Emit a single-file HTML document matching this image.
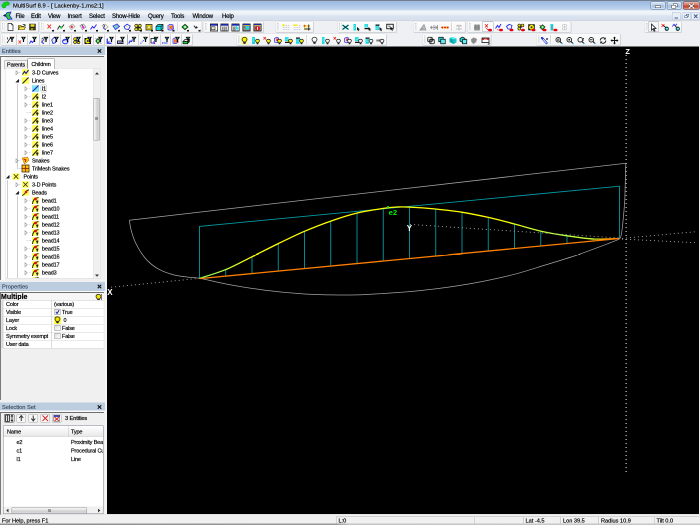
<!DOCTYPE html><html><head><meta charset="utf-8"><title>MultiSurf 8.9 - [ Lackenby-1.ms2:1]</title><style>
html,body{margin:0;padding:0;background:#f0f0f0;overflow:hidden;}
body{width:700px;height:525px;position:relative;font-family:"Liberation Sans",sans-serif;}
#root{position:absolute;left:0;top:0;width:1400px;height:1050px;transform:scale(0.5);transform-origin:0 0;will-change:transform;overflow:hidden;font-size:11px;color:#000;-webkit-font-smoothing:antialiased;-webkit-text-stroke:0.35px #000;letter-spacing:-0.3px;}
.abs{position:absolute;}
.t{position:absolute;white-space:nowrap;line-height:1;}
#title{left:0;top:0;width:1400px;height:22px;background:linear-gradient(#66707e 0,#7a8798 1.5px,#9dbbe2 2.5px,#a6c2e6 8px,#b7cfec 15px,#c6d9f0 20px,#eef3fa 21.5px)}
#menu{left:0;top:22px;width:1400px;height:19px;background:linear-gradient(#f4f7fb,#e9eff7 45%,#dbe4f0 50%,#d6e0ee);border-bottom:1px solid #b6bccc;box-sizing:border-box;}
.mi{position:absolute;top:3px;letter-spacing:-0.3px;font-size:12px;white-space:nowrap;line-height:14px;}
#tb1{left:0;top:41px;width:1400px;height:25px;background:#eef0f3;}
#tb2{left:0;top:66px;width:1400px;height:27px;background:#eef0f3;}
.band{position:absolute;background:linear-gradient(#fdfdfd,#f3f4f6);border:1px solid #d8dade;border-radius:3px;box-sizing:border-box;box-shadow:1px 1px 0 #c9ccd2;}
.grip{position:absolute;width:2px;border-left:1px dotted #9a9a9a;border-right:1px dotted #c8c8c8;}
.sep{position:absolute;width:1px;background:#b8b8b8;border-right:1px solid #fff;}
.ic{position:absolute;width:16px;height:16px;}
.pressed{position:absolute;border:1px solid #7da2ce;background:#dbe8f6;box-sizing:border-box;border-radius:2px;}
#left{left:0;top:93px;width:210px;height:936px;background:#f0f0f0;}
.phead{position:absolute;left:0;width:210px;height:18px;background:#bdcde0;}
.phead span{position:absolute;left:4px;top:3px;font-size:11.4px;letter-spacing:0;line-height:12px;color:#3a4a60;-webkit-text-stroke:0.3px #3a4a60;}
.px{position:absolute;left:194px;top:4px;width:10px;height:10px;}
#canvas{left:214px;top:93px;width:1184px;height:935px;background:#000;}
#status{left:0;top:1029px;width:1400px;height:21px;background:#f0f0f0;border-top:1px solid #d9d9d9;box-sizing:border-box;}
.st{position:absolute;top:5px;font-size:11.2px;letter-spacing:0;line-height:12px;white-space:nowrap;}
.ssep{position:absolute;top:3px;width:1px;height:15px;background:#a8a8a8;border-right:1px solid #fff;}
.tree{position:absolute;left:10px;top:43px;width:192px;height:421px;background:#fff;border:1px solid #dcdcdc;box-sizing:border-box;overflow:hidden;}
.tr{position:absolute;font-size:11px;line-height:16px;height:16px;white-space:nowrap;}
.tab{position:absolute;font-size:11px;line-height:14px;box-sizing:border-box;border:1px solid #8e8f8f;border-bottom:none;text-align:center;}
</style></head><body><div id="root">
<div id="title" class="abs">
<svg class="abs" style="left:2px;top:2px" width="18" height="16" viewBox="0 0 18 16"><path d="M1.5 8 L6 3 L13 1.5 L17 4 L16 8 L10 9 L9 13 L4 14 L2 11 Z" fill="#10d418" stroke="#0aa010" stroke-width="1"/></svg>
<div class="t" id="ttext" style="left:26px;top:4px;font-size:11.7px;letter-spacing:0;line-height:14px;text-shadow:0 0 4px #fff,0 0 6px #fff;">MultiSurf 8.9 - [ Lackenby-1.ms2:1]</div>
<div class="abs" style="left:1301px;top:3px;width:30px;height:16px;border:1px solid #5b7799;border-radius:3px;box-sizing:border-box;background:linear-gradient(#dbe7f5,#b9cde6 50%,#a3bddc 50%,#c2d5ec);box-shadow:inset 0 0 0 1px rgba(255,255,255,.6)"><div class="abs" style="left:8px;top:7px;width:12px;height:5px;background:#fff;border:1px solid #444;box-sizing:border-box"></div></div>
<div class="abs" style="left:1334px;top:3px;width:29px;height:16px;border:1px solid #5b7799;border-radius:3px;box-sizing:border-box;background:linear-gradient(#dbe7f5,#b9cde6 50%,#a3bddc 50%,#c2d5ec);box-shadow:inset 0 0 0 1px rgba(255,255,255,.6)"><div class="abs" style="left:11px;top:3px;width:9px;height:7px;border:1px solid #444;background:#fff;box-sizing:border-box"></div><div class="abs" style="left:8px;top:6px;width:9px;height:7px;border:1px solid #444;background:#fff;box-sizing:border-box"></div></div>
<div class="abs" style="left:1366px;top:3px;width:33px;height:16px;border:1px solid #5b2520;border-radius:3px;box-sizing:border-box;background:linear-gradient(#e9a99c,#d5735f 50%,#c1392b 50%,#d6735a);box-shadow:inset 0 0 0 1px rgba(255,255,255,.4)"><svg class="abs" style="left:10px;top:3px" width="12" height="10" viewBox="0 0 12 10"><path d="M1.5 1 L10.5 9 M10.5 1 L1.5 9" stroke="#3a3a3a" stroke-width="4" stroke-linecap="square"/><path d="M1.5 1 L10.5 9 M10.5 1 L1.5 9" stroke="#fff" stroke-width="2.2" stroke-linecap="square"/></svg></div>
</div>
<div id="menu" class="abs">
<svg class="abs" style="left:5px;top:1px" width="22" height="17" viewBox="0 0 22 17"><path d="M1 8 L6 5 V11Z" fill="#111"/><path d="M9 2 L17 1 L14 8 L19 15 L11 16 L6 8Z" fill="#18d420" stroke="#2828e0" stroke-width="1.6"/><circle cx="11" cy="6" r="1" fill="#c080c0"/><circle cx="12" cy="11" r="1" fill="#c080c0"/></svg>
<div class="mi" style="left:31px">File</div>
<div class="mi" style="left:62px">Edit</div>
<div class="mi" style="left:96px">View</div>
<div class="mi" style="left:135px">Insert</div>
<div class="mi" style="left:178px">Select</div>
<div class="mi" style="left:224px">Show-Hide</div>
<div class="mi" style="left:296px">Query</div>
<div class="mi" style="left:342px">Tools</div>
<div class="mi" style="left:385px">Window</div>
<div class="mi" style="left:444px">Help</div>
<div class="abs" style="left:1344px;top:2px;width:17px;height:16px;border:1px solid #b5c3d6;background:#e8eef7;box-sizing:border-box"><div class="abs" style="left:4px;top:10px;width:7px;height:2px;background:#3c5a86"></div></div>
<div class="abs" style="left:1365px;top:2px;width:17px;height:16px;border:1px solid #b5c3d6;background:#e8eef7;box-sizing:border-box"><div class="abs" style="left:6px;top:3px;width:6px;height:5px;border:1px solid #3c5a86;box-sizing:border-box"></div><div class="abs" style="left:3px;top:6px;width:6px;height:5px;border:1px solid #3c5a86;background:#e8eef7;box-sizing:border-box"></div></div>
<div class="abs" style="left:1383px;top:2px;width:16px;height:16px;border:1px solid #b5c3d6;background:#e8eef7;box-sizing:border-box"><svg class="abs" style="left:3px;top:3px" width="9" height="9" viewBox="0 0 9 9"><path d="M1 1 L8 8 M8 1 L1 8" stroke="#3c5a86" stroke-width="1.8"/></svg></div>
</div>
<div id="tb1" class="abs"><div class="band" style="left:1px;top:1px;width:76px;height:23px"></div><div class="grip" style="left:5px;top:5px;height:14px"></div>
<div class="band" style="left:79px;top:1px;width:325px;height:23px"></div><div class="grip" style="left:83px;top:5px;height:14px"></div>
<div class="band" style="left:406px;top:1px;width:121px;height:23px"></div><div class="grip" style="left:410px;top:5px;height:14px"></div>
<div class="band" style="left:550px;top:1px;width:77px;height:23px"></div><div class="grip" style="left:554px;top:5px;height:14px"></div>
<div class="band" style="left:675px;top:1px;width:118px;height:23px"></div><div class="grip" style="left:679px;top:5px;height:14px"></div>
<div class="band" style="left:826px;top:1px;width:105px;height:23px"></div><div class="grip" style="left:830px;top:5px;height:14px"></div>
<div class="band" style="left:934px;top:1px;width:208px;height:23px"></div><div class="grip" style="left:938px;top:5px;height:14px"></div>
<div class="band" style="left:1288px;top:1px;width:75px;height:23px"></div><div class="grip" style="left:1292px;top:5px;height:14px"></div>
<div class="pressed" style="left:964px;top:2px;width:23px;height:21px;background:#fafbfd;border-color:#a8acb4"></div>
<div class="pressed" style="left:1296px;top:2px;width:22px;height:21px;background:#f4f6f9;border-color:#a8acb4"></div>
<svg class="ic" style="left:13px;top:5px" viewBox="0 0 16 16"><path d="M3 1 H10 L13 4 V15 H3Z" fill="#fff" stroke="#222" stroke-width="1.4"/><path d="M10 1 V4 H13" fill="none" stroke="#222" stroke-width="1"/></svg>
<svg class="ic" style="left:36px;top:5px" viewBox="0 0 16 16"><path d="M1 5 H6 L7 6.5 H12 V13 H1Z" fill="#d8c040" stroke="#3a3000" stroke-width="1.2"/><path d="M3 8 H15 L12 13.5 H1Z" fill="#fff060" stroke="#3a3000" stroke-width="1.2"/><path d="M9 3 Q12 1 14 3.5 L15 2 V6 H11.5 L13 4.6 Q11.5 3 10 4Z" fill="#222"/></svg>
<svg class="ic" style="left:57px;top:5px" viewBox="0 0 16 16"><rect x="1.5" y="1.5" width="13" height="13" fill="#222"/><rect x="4" y="2.5" width="8" height="5" fill="#e8d820"/><rect x="4.5" y="10" width="7" height="4.5" fill="#a09000"/><rect x="9" y="10.8" width="2" height="3" fill="#222"/></svg>
<svg class="ic" style="left:92px;top:6px" viewBox="0 0 16 16"><path d="M3 2 L10 10 M10 2 L3 10" stroke="#f01818" stroke-width="1.8"/><path d="M16 12 V16 H12 Z" fill="#111"/><rect x="12" y="13" width="4" height="3" fill="#111"/></svg>
<svg class="ic" style="left:114px;top:6px" viewBox="0 0 16 16"><path d="M1 12 L5 5 L9 9 L14 2" stroke="#222" stroke-width="1.8" fill="none"/><circle cx="8.5" cy="8" r="2.3" fill="#10d020"/><path d="M16 12 V16 H12 Z" fill="#111"/><rect x="12" y="13" width="4" height="3" fill="#111"/></svg>
<svg class="ic" style="left:136px;top:6px" viewBox="0 0 16 16"><path d="M2 6 L9 1 L14 6 L7 12Z" fill="#f4f4f4" stroke="#9a9a9a" stroke-width="1.3"/><circle cx="7.5" cy="6.5" r="2.2" fill="#f01818"/><path d="M16 12 V16 H12 Z" fill="#111"/><rect x="12" y="13" width="4" height="3" fill="#111"/></svg>
<svg class="ic" style="left:158px;top:6px" viewBox="0 0 16 16"><path d="M2 4 L9 1 L14 7 L7 12Z" fill="#f0f0f0" stroke="#8a8a8a" stroke-width="1.3"/><path d="M5 2 L9 7" stroke="#222" stroke-width="1.6"/><circle cx="8.5" cy="7.5" r="2.2" fill="#f018e8"/><path d="M16 12 V16 H12 Z" fill="#111"/><rect x="12" y="13" width="4" height="3" fill="#111"/></svg>
<svg class="ic" style="left:180px;top:6px" viewBox="0 0 16 16"><path d="M1 12 L5 6 L8 9 L13 2" stroke="#2828f0" stroke-width="2" fill="none"/><path d="M16 12 V16 H12 Z" fill="#111"/><rect x="12" y="13" width="4" height="3" fill="#111"/></svg>
<svg class="ic" style="left:202px;top:6px" viewBox="0 0 16 16"><path d="M2 4 L9 1 L14 7 L8 12Z" fill="#f4f4e0" stroke="#b0a860" stroke-width="1.2"/><path d="M4 2 Q9 4 6 7 T10 12" stroke="#2828e0" stroke-width="1.8" fill="none"/><path d="M16 12 V16 H12 Z" fill="#111"/><rect x="12" y="13" width="4" height="3" fill="#111"/></svg>
<svg class="ic" style="left:224px;top:6px" viewBox="0 0 16 16"><path d="M2 5 L10 1 L15 6 L7 12Z" fill="#70e8f0" stroke="#2030e0" stroke-width="1.6"/><path d="M5 3.5 L11 9 M8 2 L13 7.5" stroke="#e06060" stroke-width="1"/><path d="M16 12 V16 H12 Z" fill="#111"/><rect x="12" y="13" width="4" height="3" fill="#111"/></svg>
<svg class="ic" style="left:246px;top:6px" viewBox="0 0 16 16"><path d="M2 6 L8 1.5 L14.5 5 L11 12 L4.5 11Z" fill="#fafafa" stroke="#2030e0" stroke-width="1.7"/><path d="M6 6 L10 7" stroke="#c8c060" stroke-width="1"/><path d="M16 12 V16 H12 Z" fill="#111"/><rect x="12" y="13" width="4" height="3" fill="#111"/></svg>
<svg class="ic" style="left:268px;top:6px" viewBox="0 0 16 16"><g fill="#f0e000" stroke="#222" stroke-width="1.3"><circle cx="4.5" cy="4.5" r="3"/><circle cx="11.5" cy="4.5" r="3"/><circle cx="4.5" cy="11.5" r="3"/><circle cx="11.5" cy="11.5" r="3"/></g><circle cx="8" cy="8" r="2" fill="#222"/><path d="M16 12 V16 H12 Z" fill="#111"/><rect x="12" y="13" width="4" height="3" fill="#111"/></svg>
<svg class="ic" style="left:290px;top:6px" viewBox="0 0 16 16"><rect x="2" y="2" width="12" height="11" fill="#f4e800" stroke="#222" stroke-width="1.6"/><rect x="5" y="5" width="6" height="5" fill="#fff480" stroke="#555" stroke-width=".8"/><path d="M16 12 V16 H12 Z" fill="#111"/><rect x="12" y="13" width="4" height="3" fill="#111"/></svg>
<svg class="ic" style="left:311px;top:6px" viewBox="0 0 16 16"><path d="M5 2 H15 V10 L11 14 H1 V6Z" fill="#10d8e0" stroke="#111" stroke-width="1.4"/><path d="M1 6 H11 V14 M11 6 L15 2" fill="none" stroke="#111" stroke-width="1.2"/><path d="M16 12 V16 H12 Z" fill="#111"/><rect x="12" y="13" width="4" height="3" fill="#111"/></svg>
<svg class="ic" style="left:333px;top:6px" viewBox="0 0 16 16"><path d="M3 4 Q8 0 13 3 L14 11 Q8 15 3 12Z" fill="#e8e0f8" stroke="#3838e0" stroke-width="1.6"/><rect x="6" y="4" width="6" height="7" fill="#f02020"/><path d="M8 4 V11 M10 4 V11" stroke="#f0d000" stroke-width="1"/><path d="M16 12 V16 H12 Z" fill="#111"/><rect x="12" y="13" width="4" height="3" fill="#111"/></svg>
<svg class="ic" style="left:362px;top:6px" viewBox="0 0 16 16"><path d="M2 7 L8 1.5 L14 7 L8 12.5Z" fill="#18d028" stroke="#222" stroke-width="1.6"/><rect x="6" y="5" width="4" height="4" fill="#b0f0b0"/><path d="M16 12 V16 H12 Z" fill="#111"/><rect x="12" y="13" width="4" height="3" fill="#111"/></svg>
<svg class="ic" style="left:385px;top:6px" viewBox="0 0 16 16"><path d="M3 4 Q4 9 9 8 M6.5 5.5 L9.5 8 L6 10" stroke="#222" stroke-width="1.6" fill="none"/><path d="M16 12 V16 H12 Z" fill="#111"/><rect x="12" y="13" width="4" height="3" fill="#111"/></svg>
<svg class="ic" style="left:420px;top:6px" viewBox="0 0 16 16"><rect x="0.5" y="1" width="15" height="14" fill="#fff" stroke="#111" stroke-width="1.6"/><rect x="1" y="1" width="14" height="3.4" fill="#1828a8"/><rect x="3" y="6.5" width="7" height="6" fill="#e8e8d0" stroke="#222" stroke-width="1.2"/></svg>
<svg class="ic" style="left:441px;top:6px" viewBox="0 0 16 16"><rect x="0.5" y="1" width="15" height="14" fill="#fff" stroke="#111" stroke-width="1.6"/><rect x="1" y="1" width="14" height="3.4" fill="#1828a8"/><rect x="3" y="6" width="10" height="8" fill="#909090"/><path d="M6.3 6 V14 M9.6 6 V14" stroke="#d8d8d8" stroke-width="1"/></svg>
<svg class="ic" style="left:463px;top:6px" viewBox="0 0 16 16"><rect x="0.5" y="1" width="15" height="14" fill="#fff" stroke="#111" stroke-width="1.6"/><rect x="1" y="1" width="14" height="3.4" fill="#1828a8"/><rect x="2.5" y="6" width="6" height="8" fill="#909090"/><path d="M9 4 L15 10 L12 10.5 L13.5 14 L12 14.5 L10.5 11 L9 13Z" fill="#18e0e8"/></svg>
<svg class="ic" style="left:485px;top:6px" viewBox="0 0 16 16"><rect x="0.5" y="1" width="15" height="14" fill="#8a8a8a" stroke="#111" stroke-width="1.6"/><rect x="1" y="1" width="14" height="3" fill="#1828a8"/><path d="M1 3.6 H15" stroke="#e8d020" stroke-width="1"/><path d="M6 5 H13 V12 H8 L5 9Z" fill="#18d8e8"/><path d="M3 6 L6 9" stroke="#e02020" stroke-width="1.2"/></svg>
<svg class="ic" style="left:507px;top:6px" viewBox="0 0 16 16"><rect x="0.5" y="1" width="15" height="14" fill="#9a9a9a" stroke="#111" stroke-width="1.6"/><rect x="1" y="1" width="14" height="3" fill="#1828a8"/><path d="M1 3.6 H15" stroke="#e8d020" stroke-width="1"/><ellipse cx="8" cy="9.5" rx="5" ry="4.6" fill="#e81010"/><rect x="7" y="6.5" width="2" height="6" fill="#fff"/></svg>
<svg class="ic" style="left:563px;top:6px" viewBox="0 0 16 16"><g fill="#c4c4d4"><rect x="3" y="7" width="3" height="1.6"/><rect x="8" y="7" width="3" height="1.6"/><rect x="12.5" y="7" width="3" height="1.6"/><rect x="3" y="11" width="3" height="1.6"/><rect x="8" y="11" width="3" height="1.6"/><rect x="12.5" y="11" width="3" height="1.6"/><rect x="8" y="3" width="3" height="1.6"/><rect x="12.5" y="3" width="3" height="1.6"/></g><rect x="2" y="1.5" width="4" height="4" fill="#f4e800"/></svg>
<svg class="ic" style="left:585px;top:6px" viewBox="0 0 16 16"><g fill="#c4c4d4"><rect x="3" y="7" width="3" height="1.6"/><rect x="8" y="7" width="3" height="1.6"/><rect x="12.5" y="7" width="3" height="1.6"/><rect x="3" y="11" width="3" height="1.6"/><rect x="8" y="11" width="3" height="1.6"/><rect x="12.5" y="11" width="3" height="1.6"/><rect x="12.5" y="3" width="3" height="1.6"/></g><rect x="1" y="2" width="9" height="2.6" fill="#f4e800"/></svg>
<svg class="ic" style="left:606px;top:6px" viewBox="0 0 16 16"><path d="M3 2 V13 M1 5 H14" stroke="#f4d000" stroke-width="2"/><rect x="1.5" y="3" width="3.4" height="3.4" fill="#f04010"/><path d="M11.5 2 V14 M3 11 H15" stroke="#222" stroke-width="1.8"/></svg>
<svg class="ic" style="left:683px;top:6px" viewBox="0 0 16 16"><path d="M2 3 L14 12 M14 3 L2 12" stroke="#10c8d0" stroke-width="3"/><path d="M2 3 L14 12 M14 3 L2 12" stroke="#111" stroke-width="1.4"/></svg>
<svg class="ic" style="left:705px;top:6px" viewBox="0 0 16 16"><rect x="2" y="1" width="5" height="13" fill="#18d8e0"/><path d="M3 4 H6 M3 7 H6 M3 10 H6" stroke="#90f0f4" stroke-width="1"/><path d="M9 7 L15 12 L12 12 L13.5 15 L12 15.5 L10.8 12.6 L9 14Z" fill="#111"/></svg>
<svg class="ic" style="left:727px;top:6px" viewBox="0 0 16 16"><rect x="2" y="1" width="7" height="7" fill="#18d8e0"/><path d="M3 3 H8 M3 5.5 H8" stroke="#90f0f4" stroke-width="1"/><rect x="2" y="9" width="8" height="2.4" fill="#111"/><path d="M10 7 L15.5 12 L13 12 L14 15 L12.6 15.4 L11.6 12.6 L10 14Z" fill="#111"/></svg>
<svg class="ic" style="left:749px;top:6px" viewBox="0 0 16 16"><rect x="2" y="4" width="7" height="9" fill="#18d8e0"/><rect x="2" y="2" width="8" height="2.4" fill="#111"/><path d="M3 7 H8 M3 10 H8" stroke="#90f0f4" stroke-width="1"/><path d="M10 7 L15.5 12 L13 12 L14 15 L12.6 15.4 L11.6 12.6 L10 14Z" fill="#111"/></svg>
<svg class="ic" style="left:772px;top:6px" viewBox="0 0 16 16"><rect x="1.5" y="1.5" width="13" height="9" fill="#fff" stroke="#111" stroke-width="1.8"/><path d="M4 5 H8 V8" stroke="#111" stroke-width="1.2" fill="none"/><path d="M9 6 L15 11.5 L12.4 11.5 L13.6 14.6 L12.2 15 L11 12 L9 13.6Z" fill="#111"/></svg>
<svg class="ic" style="left:838px;top:6px" viewBox="0 0 16 16"><path d="M2 13 L10 2 L14 13Z" fill="#c0c0c0" stroke="#909090" stroke-width="1.4"/><path d="M5 13 Q6 10 9 9" stroke="#808080" fill="none"/></svg>
<svg class="ic" style="left:860px;top:6px" viewBox="0 0 16 16"><path d="M1 8 H7 M4 5 L1 8 L4 11 M9 8 H14 M11 5 L14 8 L11 11 M8 3 V13 M15 3 V13" stroke="#8a8a8a" stroke-width="1.6" fill="none"/></svg>
<svg class="ic" style="left:882px;top:6px" viewBox="0 0 16 16"><path d="M1 8 H15" stroke="#f0d800" stroke-width="2.4"/><circle cx="2.5" cy="8" r="2" fill="#f01818"/><circle cx="13.5" cy="8" r="2" fill="#f01818"/><circle cx="8" cy="8" r="2" fill="#f01818"/><path d="M5 5.5 V10.5 M11 5.5 V10.5" stroke="#f0d800" stroke-width="1.6"/></svg>
<svg class="ic" style="left:910px;top:6px" viewBox="0 0 16 16"><path d="M8 2 V14 M2 5 L14 5 M2 11 H14 M4 3 L8 6 L12 3" stroke="#b4b4b4" stroke-width="1.4" fill="none"/></svg>
<svg class="ic" style="left:946px;top:6px" viewBox="0 0 16 16"><rect x="2" y="2" width="12" height="12" fill="#b0b0b0"/><path d="M5 2 V14 M8 2 V14 M11 2 V14 M2 5 H14 M2 8 H14 M2 11 H14" stroke="#707070" stroke-width="1"/></svg>
<svg class="ic" style="left:968px;top:6px" viewBox="0 0 16 16"><path d="M2 1.5 L8 8 M8 1.5 L2 8" stroke="#f01818" stroke-width="1.6"/><path d="M5 9 Q6 13 10 12.5" stroke="#f01818" stroke-width="1.3" fill="none"/><ellipse cx="12" cy="13" rx="4" ry="2.6" fill="#e80010"/></svg>
<svg class="ic" style="left:990px;top:6px" viewBox="0 0 16 16"><path d="M1 10 L5 4 L8 8 L12 1" stroke="#2828f0" stroke-width="2" fill="none"/><path d="M4 11 Q6 13.5 9 13" stroke="#f01818" stroke-width="1.2" fill="none"/><ellipse cx="12" cy="13" rx="4" ry="2.6" fill="#e80010"/></svg>
<svg class="ic" style="left:1011px;top:6px" viewBox="0 0 16 16"><path d="M2 6 L7 1.5 L13 4 L11 11 L5 11Z" fill="#fafafa" stroke="#2030e0" stroke-width="1.7"/><path d="M6 5 L9 8" stroke="#c8c060" stroke-width="1"/><ellipse cx="12" cy="13" rx="4" ry="2.6" fill="#e80010"/></svg>
<svg class="ic" style="left:1034px;top:6px" viewBox="0 0 16 16"><g fill="#f0e000" stroke="#222" stroke-width="1.3"><circle cx="4.5" cy="4" r="2.8"/><circle cx="11" cy="4" r="2.8"/><circle cx="4.5" cy="10.5" r="2.8"/></g><circle cx="7.5" cy="7.5" r="1.8" fill="#222"/><ellipse cx="12" cy="13" rx="4" ry="2.6" fill="#e80010"/></svg>
<svg class="ic" style="left:1055px;top:6px" viewBox="0 0 16 16"><rect x="1.5" y="1.5" width="13" height="12" fill="#111"/><circle cx="8" cy="7.5" r="5" fill="#f4e800"/><circle cx="8" cy="7.5" r="2" fill="#203090"/><ellipse cx="12" cy="13" rx="4" ry="2.6" fill="#e80010"/></svg>
<svg class="ic" style="left:1077px;top:6px" viewBox="0 0 16 16"><path d="M2 3 L5 6" stroke="#222" stroke-width="1.2"/><path d="M3 8 L8 2.5 L13 7 L8 12.5Z" fill="#18d028" stroke="#222" stroke-width="1.4"/><rect x="6.4" y="5.4" width="3.4" height="3.4" fill="#b0f0b0"/><ellipse cx="12" cy="13" rx="4" ry="2.6" fill="#e80010"/></svg>
<svg class="ic" style="left:1099px;top:6px" viewBox="0 0 16 16"><rect x="2" y="1" width="5.5" height="13" fill="#18d8e0"/><path d="M5 4 V11 L9 13" stroke="#c06060" stroke-width="1.2" fill="none"/><ellipse cx="12" cy="13" rx="4" ry="2.6" fill="#e80010"/></svg>
<svg class="ic" style="left:1121px;top:6px" viewBox="0 0 16 16"><path d="M4 2 H12 V12 H4Z M8 2 V12 M4 7 H12 M5 12 V15 M11 12 V15" stroke="#b8b8b8" stroke-width="1.3" fill="none" stroke-dasharray="2 1"/></svg>
<svg class="ic" style="left:1299px;top:6px" viewBox="0 0 16 16"><path d="M4 1 L4 13.5 L7 10.6 L9.2 15.4 L11 14.6 L8.8 10 L13 10Z" fill="#fff" stroke="#111" stroke-width="1.5"/></svg>
<svg class="ic" style="left:1322px;top:6px" viewBox="0 0 16 16"><path d="M1 1 L7 7 M7 1 L1 7" stroke="#f01818" stroke-width="1.5"/><path d="M5 4 L11 9" stroke="#111" stroke-width="1.6"/><circle cx="11.5" cy="10.5" r="3.4" fill="#18b8c8" stroke="#111" stroke-width="1.5"/><circle cx="12" cy="10" r="1.2" fill="#e0ffff"/></svg>
<svg class="ic" style="left:1344px;top:6px" viewBox="0 0 16 16"><path d="M0.5 6 L4 1.5 L6.5 4.5 L10 0.5" stroke="#2828f0" stroke-width="1.7" fill="none"/><path d="M5 4 L11 9" stroke="#111" stroke-width="1.6"/><circle cx="11.5" cy="10.5" r="3.4" fill="#18b8c8" stroke="#111" stroke-width="1.5"/><circle cx="12" cy="10" r="1.2" fill="#e0ffff"/></svg>
<div class="sep" style="left:355px;top:4px;height:17px"></div>
<div class="sep" style="left:903px;top:4px;height:17px"></div></div>
<div id="tb2" class="abs"><div class="band" style="left:1px;top:1px;width:384px;height:24px"></div><div class="grip" style="left:5px;top:5px;height:15px"></div>
<div class="band" style="left:472px;top:1px;width:301px;height:24px"></div><div class="grip" style="left:476px;top:5px;height:15px"></div>
<div class="band" style="left:844px;top:1px;width:138px;height:24px"></div><div class="grip" style="left:848px;top:5px;height:15px"></div>
<div class="band" style="left:1072px;top:1px;width:169px;height:24px"></div><div class="grip" style="left:1076px;top:5px;height:15px"></div>
<svg class="ic" style="left:13px;top:7px" viewBox="0 0 16 16"><path d="M1 13 L9 1" stroke="#111" stroke-width="1.4"/><path d="M2 1.5 V6" stroke="#111" stroke-width="1.3"/><path d="M6 0.8 H16 L12.2 6.4 V11 H9.8 V6.4 Z" fill="#0a0a0a"/><circle cx="11" cy="3" r="1.3" fill="#18b8e8"/><path d="M7 0.5 H15" stroke="#d89060" stroke-width="0.8"/></svg>
<svg class="ic" style="left:36px;top:7px" viewBox="0 0 16 16"><path d="M1 8 L6 14 M6 8 L1 14" stroke="#f03030" stroke-width="1.6"/><path d="M6 0.8 H16 L12.2 6.4 V11 H9.8 V6.4 Z" fill="#0a0a0a"/><circle cx="11" cy="3" r="1.3" fill="#18b8e8"/><path d="M7 0.5 H15" stroke="#d89060" stroke-width="0.8"/></svg>
<div class="abs" style="left:33px;top:3px;width:1px;height:21px;background:#a8aaae"></div>
<svg class="ic" style="left:58px;top:7px" viewBox="0 0 16 16"><path d="M1 14 L4 9 L7 12 L10 8" stroke="#2828f0" stroke-width="2" fill="none"/><path d="M6 0.8 H16 L12.2 6.4 V11 H9.8 V6.4 Z" fill="#0a0a0a"/><circle cx="11" cy="3" r="1.3" fill="#18b8e8"/><path d="M7 0.5 H15" stroke="#d89060" stroke-width="0.8"/></svg>
<div class="abs" style="left:55px;top:3px;width:1px;height:21px;background:#a8aaae"></div>
<svg class="ic" style="left:81px;top:7px" viewBox="0 0 16 16"><path d="M1 5 L6 2 L9 9 L5 14Z" fill="#f4f4d8" stroke="#b0a860" stroke-width="1"/><path d="M3 3 Q8 6 4 9 T7 14" stroke="#2828e0" stroke-width="1.8" fill="none"/><path d="M6 0.8 H16 L12.2 6.4 V11 H9.8 V6.4 Z" fill="#0a0a0a"/><circle cx="11" cy="3" r="1.3" fill="#18b8e8"/><path d="M7 0.5 H15" stroke="#d89060" stroke-width="0.8"/></svg>
<div class="abs" style="left:78px;top:3px;width:1px;height:21px;background:#a8aaae"></div>
<svg class="ic" style="left:102px;top:7px" viewBox="0 0 16 16"><path d="M1.5 7 L6 2 L10 4 L9 12 L4 14Z" fill="#fafafa" stroke="#2030e0" stroke-width="1.8"/><path d="M5 7 L7 11" stroke="#c8b040" stroke-width="1"/><path d="M6 0.8 H16 L12.2 6.4 V11 H9.8 V6.4 Z" fill="#0a0a0a"/><circle cx="11" cy="3" r="1.3" fill="#18b8e8"/><path d="M7 0.5 H15" stroke="#d89060" stroke-width="0.8"/></svg>
<div class="abs" style="left:99px;top:3px;width:1px;height:21px;background:#a8aaae"></div>
<svg class="ic" style="left:124px;top:7px" viewBox="0 0 16 16"><ellipse cx="6.5" cy="10" rx="5.5" ry="4.6" fill="#e8e8ff" stroke="#2838f0" stroke-width="1.8"/><path d="M2 9 Q7 5 12 8" stroke="#2838f0" stroke-width="1.4" fill="none"/><path d="M6 0.8 H16 L12.2 6.4 V11 H9.8 V6.4 Z" fill="#0a0a0a"/><circle cx="11" cy="3" r="1.3" fill="#18b8e8"/><path d="M7 0.5 H15" stroke="#d89060" stroke-width="0.8"/></svg>
<div class="abs" style="left:121px;top:3px;width:1px;height:21px;background:#a8aaae"></div>
<svg class="ic" style="left:146px;top:7px" viewBox="0 0 16 16"><g fill="#f0e000" stroke="#222" stroke-width="1.3"><circle cx="4" cy="5" r="2.8"/><circle cx="4" cy="11.5" r="2.8"/><circle cx="11" cy="11.5" r="2.8"/></g><circle cx="7.5" cy="8" r="1.8" fill="#222"/><path d="M6 0.8 H16 L12.2 6.4 V11 H9.8 V6.4 Z" fill="#0a0a0a"/><circle cx="11" cy="3" r="1.3" fill="#18b8e8"/><path d="M7 0.5 H15" stroke="#d89060" stroke-width="0.8"/></svg>
<div class="abs" style="left:143px;top:3px;width:1px;height:21px;background:#a8aaae"></div>
<svg class="ic" style="left:168px;top:7px" viewBox="0 0 16 16"><rect x="1" y="3" width="13" height="12" fill="#111"/><circle cx="7.5" cy="9" r="5" fill="#f4e800"/><circle cx="7.5" cy="9" r="2" fill="#203090"/><path d="M6 0.8 H16 L12.2 6.4 V11 H9.8 V6.4 Z" fill="#0a0a0a"/><circle cx="11" cy="3" r="1.3" fill="#18b8e8"/><path d="M7 0.5 H15" stroke="#d89060" stroke-width="0.8"/></svg>
<div class="abs" style="left:165px;top:3px;width:1px;height:21px;background:#a8aaae"></div>
<svg class="ic" style="left:190px;top:7px" viewBox="0 0 16 16"><path d="M1 3 L4 6 M10 12 L13 15" stroke="#222" stroke-width="1"/><path d="M1.5 9 L6 4 L10.5 9 L6 14.5Z" fill="#18d028" stroke="#222" stroke-width="1.4"/><rect x="4.4" y="7.4" width="3.2" height="3.2" fill="#b0f0b0"/><path d="M6 0.8 H16 L12.2 6.4 V11 H9.8 V6.4 Z" fill="#0a0a0a"/><circle cx="11" cy="3" r="1.3" fill="#18b8e8"/><path d="M7 0.5 H15" stroke="#d89060" stroke-width="0.8"/></svg>
<div class="abs" style="left:187px;top:3px;width:1px;height:21px;background:#a8aaae"></div>
<svg class="ic" style="left:212px;top:7px" viewBox="0 0 16 16"><path d="M2.5 4 V13.5 H11" stroke="#2828f0" stroke-width="2.4" fill="none"/><path d="M3 13 L7 9" stroke="#2828f0" stroke-width="1.4"/><path d="M6 0.8 H16 L12.2 6.4 V11 H9.8 V6.4 Z" fill="#0a0a0a"/><circle cx="11" cy="3" r="1.3" fill="#18b8e8"/><path d="M7 0.5 H15" stroke="#d89060" stroke-width="0.8"/></svg>
<div class="abs" style="left:209px;top:3px;width:1px;height:21px;background:#a8aaae"></div>
<svg class="ic" style="left:234px;top:7px" viewBox="0 0 16 16"><rect x="1" y="9" width="11" height="5" fill="#f0f0ff" stroke="#111" stroke-width="1.8"/><path d="M3 11.5 H10" stroke="#2838e0" stroke-width="1.4"/><path d="M6 0.8 H16 L12.2 6.4 V11 H9.8 V6.4 Z" fill="#0a0a0a"/><circle cx="11" cy="3" r="1.3" fill="#18b8e8"/><path d="M7 0.5 H15" stroke="#d89060" stroke-width="0.8"/></svg>
<div class="abs" style="left:231px;top:3px;width:1px;height:21px;background:#a8aaae"></div>
<svg class="ic" style="left:257px;top:7px" viewBox="0 0 16 16"><path d="M0.5 14 L3 9 L6 10 L8 6" stroke="#2828f0" stroke-width="2.2" fill="none"/><path d="M6 0.8 H16 L12.2 6.4 V11 H9.8 V6.4 Z" fill="#0a0a0a"/><circle cx="11" cy="3" r="1.3" fill="#18b8e8"/><path d="M7 0.5 H15" stroke="#d89060" stroke-width="0.8"/></svg>
<div class="abs" style="left:254px;top:3px;width:1px;height:21px;background:#a8aaae"></div>
<svg class="ic" style="left:280px;top:7px" viewBox="0 0 16 16"><path d="M1 14 L8 7" stroke="#2828f0" stroke-width="1.8" stroke-dasharray="2 1.6"/><path d="M6 0.8 H16 L12.2 6.4 V11 H9.8 V6.4 Z" fill="#0a0a0a"/><circle cx="11" cy="3" r="1.3" fill="#18b8e8"/><path d="M7 0.5 H15" stroke="#d89060" stroke-width="0.8"/></svg>
<div class="abs" style="left:277px;top:3px;width:1px;height:21px;background:#a8aaae"></div>
<svg class="ic" style="left:301px;top:7px" viewBox="0 0 16 16"><rect x="1" y="4" width="7" height="9" fill="#fff" stroke="#111" stroke-width="1.6"/><path d="M6 9 L9 15" stroke="#f018e8" stroke-width="2"/><path d="M3 13 L9 14" stroke="#2828f0" stroke-width="1.6"/><rect x="8" y="5" width="3" height="6" fill="#18c8d8"/><path d="M6 0.8 H16 L12.2 6.4 V11 H9.8 V6.4 Z" fill="#0a0a0a"/><circle cx="11" cy="3" r="1.3" fill="#18b8e8"/><path d="M7 0.5 H15" stroke="#d89060" stroke-width="0.8"/></svg>
<div class="abs" style="left:298px;top:3px;width:1px;height:21px;background:#a8aaae"></div>
<svg class="ic" style="left:323px;top:7px" viewBox="0 0 16 16"><path d="M1 12 L3 14 M3 12 L1 14" stroke="#2828f0" stroke-width="1.2"/><path d="M4 13 H12" stroke="#2828f0" stroke-width="1.6"/><path d="M6 0.8 H16 L12.2 6.4 V11 H9.8 V6.4 Z" fill="#0a0a0a"/><circle cx="11" cy="3" r="1.3" fill="#18b8e8"/><path d="M7 0.5 H15" stroke="#d89060" stroke-width="0.8"/></svg>
<div class="abs" style="left:320px;top:3px;width:1px;height:21px;background:#a8aaae"></div>
<svg class="ic" style="left:344px;top:7px" viewBox="0 0 16 16"><path d="M2 5 Q7 1 11 4 L12 12 Q7 16 2 13Z" fill="#e8e0f8" stroke="#3838e0" stroke-width="1.6"/><rect x="4.5" y="5.5" width="5.5" height="7" fill="#f02020"/><path d="M6.3 5.5 V12.5 M8.2 5.5 V12.5" stroke="#f0d000" stroke-width="1"/><path d="M6 0.8 H16 L12.2 6.4 V11 H9.8 V6.4 Z" fill="#0a0a0a"/><circle cx="11" cy="3" r="1.3" fill="#18b8e8"/><path d="M7 0.5 H15" stroke="#d89060" stroke-width="0.8"/></svg>
<div class="abs" style="left:341px;top:3px;width:1px;height:21px;background:#a8aaae"></div>
<svg class="ic" style="left:365px;top:7px" viewBox="0 0 16 16"><path d="M1 10 L5 6 H14 L10 10Z" fill="#f0f0f0" stroke="#111" stroke-width="1.3"/><path d="M1 10 H10 V14.5 H1Z" fill="#20d838" stroke="#111" stroke-width="1.3"/><path d="M10 10 L14 6 V10.5 L10 14.5Z" fill="#109020" stroke="#111" stroke-width="1.1"/><path d="M6 0.8 H16 L12.2 6.4 V11 H9.8 V6.4 Z" fill="#0a0a0a"/><circle cx="11" cy="3" r="1.3" fill="#18b8e8"/><path d="M7 0.5 H15" stroke="#d89060" stroke-width="0.8"/></svg>
<div class="abs" style="left:362px;top:3px;width:1px;height:21px;background:#a8aaae"></div>
<svg class="ic" style="left:481px;top:7px" viewBox="0 0 16 16"><rect x="1" y="0" width="14" height="16" fill="#ffffa0"/><g transform="translate(0,0)"><path d="M8 1.5 C4.5 1.5 3 4 3 6 C3 8 5 9.2 5.5 11 L10.5 11 C11 9.2 13 8 13 6 C13 4 11.5 1.5 8 1.5Z" fill="#f8f000" stroke="#222" stroke-width="1.5"/><rect x="5.8" y="11" width="4.4" height="3.6" fill="#222"/></g></svg>
<svg class="ic" style="left:504px;top:7px" viewBox="0 0 16 16"><rect x="0" y="1" width="5" height="14" fill="#18d8e0"/><path d="M1 4 H4 M1 7 H4 M1 10 H4" stroke="#90f0f4" stroke-width="1"/><path d="M11 5.5 C8.4 5.5 7.2 7.3 7.2 8.8 C7.2 10.4 8.8 11.2 9.2 12.5 L12.8 12.5 C13.2 11.2 14.8 10.4 14.8 8.8 C14.8 7.3 13.6 5.5 11 5.5Z" fill="#f8f000" stroke="#222" stroke-width="1.4"/><rect x="9.3" y="12.5" width="3.4" height="3" fill="#222"/></svg>
<svg class="ic" style="left:526px;top:7px" viewBox="0 0 16 16"><path d="M1 1 L6 6 M6 1 L1 6" stroke="#f01818" stroke-width="1.5"/><path d="M11 5.5 C8.4 5.5 7.2 7.3 7.2 8.8 C7.2 10.4 8.8 11.2 9.2 12.5 L12.8 12.5 C13.2 11.2 14.8 10.4 14.8 8.8 C14.8 7.3 13.6 5.5 11 5.5Z" fill="#f8f000" stroke="#222" stroke-width="1.4"/><rect x="9.3" y="12.5" width="3.4" height="3" fill="#222"/></svg>
<svg class="ic" style="left:548px;top:7px" viewBox="0 0 16 16"><path d="M1 4 Q5 0 9 3 L10 11 Q5 14 1 11Z" fill="#e8e0f8" stroke="#3838e0" stroke-width="1.5"/><path d="M4 4 L8 9 M8 4 L4 9" stroke="#f01818" stroke-width="1.4"/><path d="M11 5.5 C8.4 5.5 7.2 7.3 7.2 8.8 C7.2 10.4 8.8 11.2 9.2 12.5 L12.8 12.5 C13.2 11.2 14.8 10.4 14.8 8.8 C14.8 7.3 13.6 5.5 11 5.5Z" fill="#f8f000" stroke="#222" stroke-width="1.4"/><rect x="9.3" y="12.5" width="3.4" height="3" fill="#222"/></svg>
<svg class="ic" style="left:570px;top:7px" viewBox="0 0 16 16"><rect x="0" y="1" width="7" height="8" fill="#18d8e0"/><path d="M1 3 H6 M1 5.5 H6" stroke="#90f0f4" stroke-width="1"/><rect x="0" y="10.5" width="8" height="2.4" fill="#111"/><path d="M11 5.5 C8.4 5.5 7.2 7.3 7.2 8.8 C7.2 10.4 8.8 11.2 9.2 12.5 L12.8 12.5 C13.2 11.2 14.8 10.4 14.8 8.8 C14.8 7.3 13.6 5.5 11 5.5Z" fill="#f8f000" stroke="#222" stroke-width="1.4"/><rect x="9.3" y="12.5" width="3.4" height="3" fill="#222"/></svg>
<svg class="ic" style="left:592px;top:7px" viewBox="0 0 16 16"><rect x="0" y="4.5" width="7" height="10" fill="#18d8e0"/><rect x="0" y="2" width="8" height="2.4" fill="#111"/><path d="M1 7 H6 M1 10 H6" stroke="#90f0f4" stroke-width="1"/><path d="M11 5.5 C8.4 5.5 7.2 7.3 7.2 8.8 C7.2 10.4 8.8 11.2 9.2 12.5 L12.8 12.5 C13.2 11.2 14.8 10.4 14.8 8.8 C14.8 7.3 13.6 5.5 11 5.5Z" fill="#f8f000" stroke="#222" stroke-width="1.4"/><rect x="9.3" y="12.5" width="3.4" height="3" fill="#222"/></svg>
<svg class="ic" style="left:621px;top:7px" viewBox="0 0 16 16"><g transform="translate(0,0)"><path d="M8 1.5 C4.5 1.5 3 4 3 6 C3 8 5 9.2 5.5 11 L10.5 11 C11 9.2 13 8 13 6 C13 4 11.5 1.5 8 1.5Z" fill="#fafafa" stroke="#222" stroke-width="1.5"/><rect x="5.8" y="11" width="4.4" height="3.6" fill="#222"/></g></svg>
<svg class="ic" style="left:644px;top:7px" viewBox="0 0 16 16"><rect x="0" y="1" width="5" height="14" fill="#18d8e0"/><path d="M1 4 H4 M1 7 H4 M1 10 H4" stroke="#90f0f4" stroke-width="1"/><path d="M11 5.5 C8.4 5.5 7.2 7.3 7.2 8.8 C7.2 10.4 8.8 11.2 9.2 12.5 L12.8 12.5 C13.2 11.2 14.8 10.4 14.8 8.8 C14.8 7.3 13.6 5.5 11 5.5Z" fill="#f0f0f0" stroke="#222" stroke-width="1.4"/><rect x="9.3" y="12.5" width="3.4" height="3" fill="#222"/></svg>
<svg class="ic" style="left:666px;top:7px" viewBox="0 0 16 16"><path d="M1 1 L6 6 M6 1 L1 6" stroke="#f01818" stroke-width="1.5"/><path d="M11 5.5 C8.4 5.5 7.2 7.3 7.2 8.8 C7.2 10.4 8.8 11.2 9.2 12.5 L12.8 12.5 C13.2 11.2 14.8 10.4 14.8 8.8 C14.8 7.3 13.6 5.5 11 5.5Z" fill="#f0f0f0" stroke="#222" stroke-width="1.4"/><rect x="9.3" y="12.5" width="3.4" height="3" fill="#222"/></svg>
<svg class="ic" style="left:688px;top:7px" viewBox="0 0 16 16"><path d="M1 4 Q5 0 9 3 L10 11 Q5 14 1 11Z" fill="#e8e0f8" stroke="#3838e0" stroke-width="1.5"/><path d="M4 4 L8 9 M8 4 L4 9" stroke="#f01818" stroke-width="1.4"/><path d="M11 5.5 C8.4 5.5 7.2 7.3 7.2 8.8 C7.2 10.4 8.8 11.2 9.2 12.5 L12.8 12.5 C13.2 11.2 14.8 10.4 14.8 8.8 C14.8 7.3 13.6 5.5 11 5.5Z" fill="#f0f0f0" stroke="#222" stroke-width="1.4"/><rect x="9.3" y="12.5" width="3.4" height="3" fill="#222"/></svg>
<svg class="ic" style="left:710px;top:7px" viewBox="0 0 16 16"><rect x="0" y="1" width="7" height="8" fill="#18d8e0"/><path d="M1 3 H6 M1 5.5 H6" stroke="#90f0f4" stroke-width="1"/><rect x="0" y="10.5" width="8" height="2.4" fill="#111"/><path d="M11 5.5 C8.4 5.5 7.2 7.3 7.2 8.8 C7.2 10.4 8.8 11.2 9.2 12.5 L12.8 12.5 C13.2 11.2 14.8 10.4 14.8 8.8 C14.8 7.3 13.6 5.5 11 5.5Z" fill="#f0f0f0" stroke="#222" stroke-width="1.4"/><rect x="9.3" y="12.5" width="3.4" height="3" fill="#222"/></svg>
<svg class="ic" style="left:731px;top:7px" viewBox="0 0 16 16"><rect x="0" y="4.5" width="7" height="10" fill="#18d8e0"/><rect x="0" y="2" width="8" height="2.4" fill="#111"/><path d="M1 7 H6 M1 10 H6" stroke="#90f0f4" stroke-width="1"/><path d="M11 5.5 C8.4 5.5 7.2 7.3 7.2 8.8 C7.2 10.4 8.8 11.2 9.2 12.5 L12.8 12.5 C13.2 11.2 14.8 10.4 14.8 8.8 C14.8 7.3 13.6 5.5 11 5.5Z" fill="#f0f0f0" stroke="#222" stroke-width="1.4"/><rect x="9.3" y="12.5" width="3.4" height="3" fill="#222"/></svg>
<svg class="ic" style="left:753px;top:7px" viewBox="0 0 16 16"><rect x="0" y="6" width="7" height="4" fill="#555"/><path d="M2 6 V10 M4.5 6 V10" stroke="#bbb" stroke-width=".8"/><path d="M11 5.5 C8.4 5.5 7.2 7.3 7.2 8.8 C7.2 10.4 8.8 11.2 9.2 12.5 L12.8 12.5 C13.2 11.2 14.8 10.4 14.8 8.8 C14.8 7.3 13.6 5.5 11 5.5Z" fill="#f0f0f0" stroke="#222" stroke-width="1.4"/><rect x="9.3" y="12.5" width="3.4" height="3" fill="#222"/></svg>
<svg class="ic" style="left:854px;top:7px" viewBox="0 0 16 16"><rect x="1.5" y="1.5" width="9" height="9" rx="2" fill="#fff" stroke="#111" stroke-width="1.6"/><rect x="5.5" y="5.5" width="9" height="9" rx="2" fill="none" stroke="#111" stroke-width="1.6"/><path d="M1.5 7 H14 M8 2 V14" stroke="#111" stroke-width="1"/></svg>
<svg class="ic" style="left:876px;top:7px" viewBox="0 0 16 16"><rect x="1.5" y="1.5" width="9" height="9" fill="#18d8e0" stroke="#111" stroke-width="1.5"/><rect x="5.5" y="5.5" width="9" height="9" fill="#60f0f4" stroke="#111" stroke-width="1.5"/></svg>
<svg class="ic" style="left:898px;top:7px" viewBox="0 0 16 16"><path d="M1 3 L7 1 L15 4 V12 L9 15 L1 11Z" fill="#10c8d0"/><path d="M1 3 L9 6 L15 4 L7 1Z" fill="#50f0f4"/><path d="M9 6 V15 L1 11 V3Z" fill="#10a8b0"/></svg>
<svg class="ic" style="left:919px;top:7px" viewBox="0 0 16 16"><path d="M1 4 L6 1 L11 4 V9 L6 12 L1 9Z" fill="#18d8e0" stroke="#111" stroke-width="1.5"/><rect x="6" y="6" width="8.5" height="8.5" fill="#60f0f4" stroke="#111" stroke-width="1.5"/></svg>
<svg class="ic" style="left:940px;top:7px" viewBox="0 0 16 16"><path d="M2 6 L7 2 L14 5 L12 11 L7 15 L3 11Z" fill="#8c8c8c" stroke="#b0b0b0" stroke-width="1"/></svg>
<svg class="ic" style="left:963px;top:7px" viewBox="0 0 16 16"><rect x="1" y="3" width="14" height="9" fill="#fff" stroke="#111" stroke-width="1.6"/><rect x="2" y="4" width="12" height="3" fill="#e82020"/><path d="M4 8 L8 5 L12 8" stroke="#fff" stroke-width="1.2" fill="none"/><path d="M16 12 V16 H12Z" fill="#111"/></svg>
<svg class="ic" style="left:1081px;top:7px" viewBox="0 0 16 16"><path d="M2 2 L5 4" stroke="#111" stroke-width="1.6"/><path d="M3 3 L12 13" stroke="#2038d0" stroke-width="4.4" stroke-linecap="round"/><path d="M5.5 6 L11.5 12.6" stroke="#e8f0ff" stroke-width="2" stroke-linecap="round"/><path d="M13 3 V7 M11 5 H15" stroke="#111" stroke-width="1.4"/></svg>
<svg class="ic" style="left:1110px;top:7px" viewBox="0 0 16 16"><circle cx="6.5" cy="6.5" r="4.6" fill="#f4f4f4" stroke="#111" stroke-width="1.7"/><rect x="4" y="4" width="5" height="5" fill="#777"/><path d="M10 10 L14.5 14.5" stroke="#111" stroke-width="2.2"/><path d="M12.5 13 L14.5 15" stroke="#10b0e0" stroke-width="2"/></svg>
<svg class="ic" style="left:1132px;top:7px" viewBox="0 0 16 16"><circle cx="6.5" cy="6.5" r="4.6" fill="#f4f4f4" stroke="#111" stroke-width="1.7"/><circle cx="6.5" cy="6.5" r="1.8" fill="#111"/><path d="M10 10 L14.5 14.5" stroke="#111" stroke-width="2.2"/><path d="M12.5 13 L14.5 15" stroke="#10b0e0" stroke-width="2"/></svg>
<svg class="ic" style="left:1154px;top:7px" viewBox="0 0 16 16"><circle cx="6.5" cy="6.5" r="4.6" fill="#fafafa" stroke="#111" stroke-width="1.7"/><path d="M13 3 V8" stroke="#111" stroke-width="1.6" stroke-dasharray="2 1"/><path d="M10 10 L14.5 14.5" stroke="#111" stroke-width="2.2"/><path d="M12.5 13 L14.5 15" stroke="#10b0e0" stroke-width="2"/></svg>
<svg class="ic" style="left:1176px;top:7px" viewBox="0 0 16 16"><circle cx="6.5" cy="6.5" r="4.6" fill="#f4f4f4" stroke="#111" stroke-width="1.7"/><path d="M4 6.5 H9" stroke="#111" stroke-width="1.6"/><path d="M10 10 L14.5 14.5" stroke="#111" stroke-width="2.2"/><path d="M12.5 13 L14.5 15" stroke="#10b0e0" stroke-width="2"/></svg>
<svg class="ic" style="left:1198px;top:7px" viewBox="0 0 16 16"><path d="M2.5 8 A5.5 5.5 0 0 1 12 4.2 M13.5 8 A5.5 5.5 0 0 1 4 11.8" stroke="#111" stroke-width="1.8" fill="none"/><path d="M13.5 1.5 V6 H9Z M2.5 14.5 V10 H7Z" fill="#111"/></svg>
<svg class="ic" style="left:1221px;top:7px" viewBox="0 0 16 16"><path d="M8 1 V15 M1 8 H15" stroke="#111" stroke-width="2"/><path d="M8 0 L11 3.5 H5Z M8 16 L11 12.5 H5Z M0 8 L3.5 5 V11Z M16 8 L12.5 5 V11Z" fill="#111"/></svg>
<div class="sep" style="left:612px;top:4px;height:18px"></div>
<div class="sep" style="left:1101px;top:4px;height:18px"></div></div>
<div id="left" class="abs"><div class="phead" style="top:0;height:17px"><span>Entities</span><svg class="px" viewBox="0 0 10 10"><path d="M1.5 1.5 L8.5 8.5 M8.5 1.5 L1.5 8.5" stroke="#111" stroke-width="2.2"/></svg></div>
<div class="abs" style="left:0;top:17px;width:210px;height:2px;background:#fafafa"></div>
<div class="abs" style="left:0;top:19px;width:208px;height:2px;background:#6f6f6f"></div>
<div class="abs" style="left:0px;top:21px;width:2px;height:446px;background:#7a7a7a"></div>
<div class="abs" style="left:3px;top:21px;width:7px;height:446px;background:#fbfbfb"></div>
<div class="tab" style="left:9px;top:27px;width:46px;height:18px;background:linear-gradient(#f8f8f8,#ececec);padding-top:1px">Parents</div>
<div class="tab" style="left:55px;top:24px;width:54px;height:21px;background:#fff;padding-top:3px;z-index:2">Children</div>
<div class="tree">
<svg class="abs" style="left:19px;top:3.0px" width="9" height="11" viewBox="0 0 9 11"><path d="M2 1.5 L6.5 5.5 L2 9.5 Z" fill="#fff" stroke="#8e8e8e" stroke-width="1.1"/></svg>
<div class="abs" style="left:27px;top:8.0px;width:4px;height:0;border-top:1px dotted #b8c8d8"></div>
<svg class="abs" style="left:32px;top:0.0px" width="16" height="16" viewBox="0 0 16 16"><rect x="1" y="1.5" width="14" height="13" fill="#ffff58"/><path d="M2 12 L6 6 L9 10 L14 3" stroke="#1a1a9a" stroke-width="2.2" fill="none"/></svg>
<div class="tr" style="left:53px;top:0.0px">3-D Curves</div>
<svg class="abs" style="left:19px;top:20.0px" width="9" height="9" viewBox="0 0 9 9"><path d="M7.5 1.5 L7.5 7.5 L1.5 7.5 Z" fill="#262626" stroke="#262626" stroke-width="1"/></svg>
<div class="abs" style="left:27px;top:24.0px;width:4px;height:0;border-top:1px dotted #b8c8d8"></div>
<svg class="abs" style="left:32px;top:16.0px" width="16" height="16" viewBox="0 0 16 16"><rect x="1" y="1.5" width="14" height="13" fill="#ffff58"/><path d="M2 14 L14 2" stroke="#222" stroke-width="2.2"/></svg>
<div class="tr" style="left:53px;top:16.0px">Lines</div>
<svg class="abs" style="left:37px;top:35.0px" width="9" height="11" viewBox="0 0 9 11"><path d="M2 1.5 L6.5 5.5 L2 9.5 Z" fill="#fff" stroke="#8e8e8e" stroke-width="1.1"/></svg>
<div class="abs" style="left:47px;top:40.0px;width:4px;height:0;border-top:1px dotted #b8c8d8"></div>
<svg class="abs" style="left:52px;top:32.0px" width="16" height="16" viewBox="0 0 16 16"><rect x="1" y="1.5" width="14" height="13" fill="#7fe6ee"/><path d="M2 14 L14 2" stroke="#1a1ad0" stroke-width="2.2"/></svg>
<div class="tr" style="left:70px;top:32.0px;width:13px;box-sizing:border-box;border:1px solid #c8c8c8;border-radius:3px;background:#f4f4f4;line-height:14px;padding-left:2px">l1</div>
<svg class="abs" style="left:37px;top:51.0px" width="9" height="11" viewBox="0 0 9 11"><path d="M2 1.5 L6.5 5.5 L2 9.5 Z" fill="#fff" stroke="#8e8e8e" stroke-width="1.1"/></svg>
<div class="abs" style="left:47px;top:56.0px;width:4px;height:0;border-top:1px dotted #b8c8d8"></div>
<svg class="abs" style="left:52px;top:48.0px" width="16" height="16" viewBox="0 0 16 16"><rect x="1" y="1.5" width="14" height="13" fill="#ffff58"/><path d="M2 14 L12.5 2.5" stroke="#222" stroke-width="2.2"/><circle cx="11.5" cy="10" r="2.4" fill="#222"/><path d="M11.5 10 V14.5" stroke="#222" stroke-width="1.8"/></svg>
<div class="tr" style="left:73px;top:48.0px">l2</div>
<svg class="abs" style="left:37px;top:67.0px" width="9" height="11" viewBox="0 0 9 11"><path d="M2 1.5 L6.5 5.5 L2 9.5 Z" fill="#fff" stroke="#8e8e8e" stroke-width="1.1"/></svg>
<div class="abs" style="left:47px;top:72.0px;width:4px;height:0;border-top:1px dotted #b8c8d8"></div>
<svg class="abs" style="left:52px;top:64.0px" width="16" height="16" viewBox="0 0 16 16"><rect x="1" y="1.5" width="14" height="13" fill="#ffff58"/><path d="M2 14 L12.5 2.5" stroke="#222" stroke-width="2.2"/><circle cx="11.5" cy="10" r="2.4" fill="#222"/><path d="M11.5 10 V14.5" stroke="#222" stroke-width="1.8"/></svg>
<div class="tr" style="left:73px;top:64.0px">line1</div>
<div class="abs" style="left:41px;top:88.0px;width:9px;height:0;border-top:1px dotted #a0a0a0"></div>
<div class="abs" style="left:47px;top:88.0px;width:4px;height:0;border-top:1px dotted #b8c8d8"></div>
<svg class="abs" style="left:52px;top:80.0px" width="16" height="16" viewBox="0 0 16 16"><rect x="1" y="1.5" width="14" height="13" fill="#ffff58"/><path d="M2 14 L12.5 2.5" stroke="#222" stroke-width="2.2"/><circle cx="11.5" cy="10" r="2.4" fill="#222"/><path d="M11.5 10 V14.5" stroke="#222" stroke-width="1.8"/></svg>
<div class="tr" style="left:73px;top:80.0px">line2</div>
<svg class="abs" style="left:37px;top:99.0px" width="9" height="11" viewBox="0 0 9 11"><path d="M2 1.5 L6.5 5.5 L2 9.5 Z" fill="#fff" stroke="#8e8e8e" stroke-width="1.1"/></svg>
<div class="abs" style="left:47px;top:104.0px;width:4px;height:0;border-top:1px dotted #b8c8d8"></div>
<svg class="abs" style="left:52px;top:96.0px" width="16" height="16" viewBox="0 0 16 16"><rect x="1" y="1.5" width="14" height="13" fill="#ffff58"/><path d="M2 14 L12.5 2.5" stroke="#222" stroke-width="2.2"/><circle cx="11.5" cy="10" r="2.4" fill="#222"/><path d="M11.5 10 V14.5" stroke="#222" stroke-width="1.8"/></svg>
<div class="tr" style="left:73px;top:96.0px">line3</div>
<svg class="abs" style="left:37px;top:115.0px" width="9" height="11" viewBox="0 0 9 11"><path d="M2 1.5 L6.5 5.5 L2 9.5 Z" fill="#fff" stroke="#8e8e8e" stroke-width="1.1"/></svg>
<div class="abs" style="left:47px;top:120.0px;width:4px;height:0;border-top:1px dotted #b8c8d8"></div>
<svg class="abs" style="left:52px;top:112.0px" width="16" height="16" viewBox="0 0 16 16"><rect x="1" y="1.5" width="14" height="13" fill="#ffff58"/><path d="M2 14 L12.5 2.5" stroke="#222" stroke-width="2.2"/><circle cx="11.5" cy="10" r="2.4" fill="#222"/><path d="M11.5 10 V14.5" stroke="#222" stroke-width="1.8"/></svg>
<div class="tr" style="left:73px;top:112.0px">line4</div>
<svg class="abs" style="left:37px;top:131.0px" width="9" height="11" viewBox="0 0 9 11"><path d="M2 1.5 L6.5 5.5 L2 9.5 Z" fill="#fff" stroke="#8e8e8e" stroke-width="1.1"/></svg>
<div class="abs" style="left:47px;top:136.0px;width:4px;height:0;border-top:1px dotted #b8c8d8"></div>
<svg class="abs" style="left:52px;top:128.0px" width="16" height="16" viewBox="0 0 16 16"><rect x="1" y="1.5" width="14" height="13" fill="#ffff58"/><path d="M2 14 L12.5 2.5" stroke="#222" stroke-width="2.2"/><circle cx="11.5" cy="10" r="2.4" fill="#222"/><path d="M11.5 10 V14.5" stroke="#222" stroke-width="1.8"/></svg>
<div class="tr" style="left:73px;top:128.0px">line5</div>
<svg class="abs" style="left:37px;top:147.0px" width="9" height="11" viewBox="0 0 9 11"><path d="M2 1.5 L6.5 5.5 L2 9.5 Z" fill="#fff" stroke="#8e8e8e" stroke-width="1.1"/></svg>
<div class="abs" style="left:47px;top:152.0px;width:4px;height:0;border-top:1px dotted #b8c8d8"></div>
<svg class="abs" style="left:52px;top:144.0px" width="16" height="16" viewBox="0 0 16 16"><rect x="1" y="1.5" width="14" height="13" fill="#ffff58"/><path d="M2 14 L12.5 2.5" stroke="#222" stroke-width="2.2"/><circle cx="11.5" cy="10" r="2.4" fill="#222"/><path d="M11.5 10 V14.5" stroke="#222" stroke-width="1.8"/></svg>
<div class="tr" style="left:73px;top:144.0px">line6</div>
<svg class="abs" style="left:37px;top:163.0px" width="9" height="11" viewBox="0 0 9 11"><path d="M2 1.5 L6.5 5.5 L2 9.5 Z" fill="#fff" stroke="#8e8e8e" stroke-width="1.1"/></svg>
<div class="abs" style="left:47px;top:168.0px;width:4px;height:0;border-top:1px dotted #b8c8d8"></div>
<svg class="abs" style="left:52px;top:160.0px" width="16" height="16" viewBox="0 0 16 16"><rect x="1" y="1.5" width="14" height="13" fill="#ffff58"/><path d="M2 14 L12.5 2.5" stroke="#222" stroke-width="2.2"/><circle cx="11.5" cy="10" r="2.4" fill="#222"/><path d="M11.5 10 V14.5" stroke="#222" stroke-width="1.8"/></svg>
<div class="tr" style="left:73px;top:160.0px">line7</div>
<svg class="abs" style="left:19px;top:179.0px" width="9" height="11" viewBox="0 0 9 11"><path d="M2 1.5 L6.5 5.5 L2 9.5 Z" fill="#fff" stroke="#8e8e8e" stroke-width="1.1"/></svg>
<div class="abs" style="left:27px;top:184.0px;width:4px;height:0;border-top:1px dotted #b8c8d8"></div>
<svg class="abs" style="left:32px;top:176.0px" width="16" height="16" viewBox="0 0 16 16"><path d="M1 3 L12 1 L15 8 L6 15 Z" fill="#ffd21a" stroke="#a06000" stroke-width="1"/><path d="M4 5 L9 7 L7 11" stroke="#d01010" stroke-width="2" fill="none"/></svg>
<div class="tr" style="left:53px;top:176.0px">Snakes</div>
<div class="abs" style="left:23px;top:200.0px;width:9px;height:0;border-top:1px dotted #a0a0a0"></div>
<div class="abs" style="left:27px;top:200.0px;width:4px;height:0;border-top:1px dotted #b8c8d8"></div>
<svg class="abs" style="left:32px;top:192.0px" width="16" height="16" viewBox="0 0 16 16"><rect x="1" y="1" width="14" height="14" fill="#ffc010" stroke="#503000" stroke-width="1.6"/><path d="M1 8 H15 M8 1 V15" stroke="#503000" stroke-width="1.4"/><circle cx="8" cy="8" r="2" fill="#d01010"/></svg>
<div class="tr" style="left:53px;top:192.0px">TriMesh Snakes</div>
<svg class="abs" style="left:0px;top:212.0px" width="9" height="9" viewBox="0 0 9 9"><path d="M7.5 1.5 L7.5 7.5 L1.5 7.5 Z" fill="#262626" stroke="#262626" stroke-width="1"/></svg>
<div class="abs" style="left:8px;top:216.0px;width:4px;height:0;border-top:1px dotted #b8c8d8"></div>
<svg class="abs" style="left:13px;top:208.0px" width="16" height="16" viewBox="0 0 16 16"><rect x="1" y="1.5" width="14" height="13" fill="#ffff58"/><path d="M3.5 3.5 L12.5 12.5 M12.5 3.5 L3.5 12.5" stroke="#222" stroke-width="1.5"/></svg>
<div class="tr" style="left:36px;top:208.0px">Points</div>
<svg class="abs" style="left:19px;top:227.0px" width="9" height="11" viewBox="0 0 9 11"><path d="M2 1.5 L6.5 5.5 L2 9.5 Z" fill="#fff" stroke="#8e8e8e" stroke-width="1.1"/></svg>
<div class="abs" style="left:27px;top:232.0px;width:4px;height:0;border-top:1px dotted #b8c8d8"></div>
<svg class="abs" style="left:32px;top:224.0px" width="16" height="16" viewBox="0 0 16 16"><rect x="1" y="1.5" width="14" height="13" fill="#ffff58"/><path d="M3.5 3.5 L12.5 12.5 M12.5 3.5 L3.5 12.5" stroke="#222" stroke-width="1.5"/></svg>
<div class="tr" style="left:53px;top:224.0px">3-D Points</div>
<svg class="abs" style="left:19px;top:244.0px" width="9" height="9" viewBox="0 0 9 9"><path d="M7.5 1.5 L7.5 7.5 L1.5 7.5 Z" fill="#262626" stroke="#262626" stroke-width="1"/></svg>
<div class="abs" style="left:27px;top:248.0px;width:4px;height:0;border-top:1px dotted #b8c8d8"></div>
<svg class="abs" style="left:32px;top:240.0px" width="16" height="16" viewBox="0 0 16 16"><rect x="1" y="1.5" width="14" height="13" fill="#ffff58"/><path d="M1 14 Q5 13 8 8 T15 3" stroke="#222" stroke-width="1.8" fill="none"/><circle cx="9" cy="7" r="2.6" fill="#e01010"/></svg>
<div class="tr" style="left:53px;top:240.0px">Beads</div>
<svg class="abs" style="left:37px;top:259.0px" width="9" height="11" viewBox="0 0 9 11"><path d="M2 1.5 L6.5 5.5 L2 9.5 Z" fill="#fff" stroke="#8e8e8e" stroke-width="1.1"/></svg>
<div class="abs" style="left:47px;top:264.0px;width:4px;height:0;border-top:1px dotted #b8c8d8"></div>
<svg class="abs" style="left:52px;top:256.0px" width="16" height="16" viewBox="0 0 16 16"><rect x="1" y="1.5" width="14" height="13" fill="#ffff58"/><path d="M2 15 Q3 6 8 4 T14 2" stroke="#222" stroke-width="2" fill="none"/><circle cx="8" cy="5" r="2.8" fill="#e01010"/><circle cx="11.5" cy="10" r="2.3" fill="#222"/><path d="M11.5 10 V14.5" stroke="#222" stroke-width="1.8"/></svg>
<div class="tr" style="left:73px;top:256.0px">bead1</div>
<svg class="abs" style="left:37px;top:275.0px" width="9" height="11" viewBox="0 0 9 11"><path d="M2 1.5 L6.5 5.5 L2 9.5 Z" fill="#fff" stroke="#8e8e8e" stroke-width="1.1"/></svg>
<div class="abs" style="left:47px;top:280.0px;width:4px;height:0;border-top:1px dotted #b8c8d8"></div>
<svg class="abs" style="left:52px;top:272.0px" width="16" height="16" viewBox="0 0 16 16"><rect x="1" y="1.5" width="14" height="13" fill="#ffff58"/><path d="M2 15 Q3 6 8 4 T14 2" stroke="#222" stroke-width="2" fill="none"/><circle cx="8" cy="5" r="2.8" fill="#e01010"/><circle cx="11.5" cy="10" r="2.3" fill="#222"/><path d="M11.5 10 V14.5" stroke="#222" stroke-width="1.8"/></svg>
<div class="tr" style="left:73px;top:272.0px">bead10</div>
<svg class="abs" style="left:37px;top:291.0px" width="9" height="11" viewBox="0 0 9 11"><path d="M2 1.5 L6.5 5.5 L2 9.5 Z" fill="#fff" stroke="#8e8e8e" stroke-width="1.1"/></svg>
<div class="abs" style="left:47px;top:296.0px;width:4px;height:0;border-top:1px dotted #b8c8d8"></div>
<svg class="abs" style="left:52px;top:288.0px" width="16" height="16" viewBox="0 0 16 16"><rect x="1" y="1.5" width="14" height="13" fill="#ffff58"/><path d="M2 15 Q3 6 8 4 T14 2" stroke="#222" stroke-width="2" fill="none"/><circle cx="8" cy="5" r="2.8" fill="#e01010"/><circle cx="11.5" cy="10" r="2.3" fill="#222"/><path d="M11.5 10 V14.5" stroke="#222" stroke-width="1.8"/></svg>
<div class="tr" style="left:73px;top:288.0px">bead11</div>
<svg class="abs" style="left:37px;top:307.0px" width="9" height="11" viewBox="0 0 9 11"><path d="M2 1.5 L6.5 5.5 L2 9.5 Z" fill="#fff" stroke="#8e8e8e" stroke-width="1.1"/></svg>
<div class="abs" style="left:47px;top:312.0px;width:4px;height:0;border-top:1px dotted #b8c8d8"></div>
<svg class="abs" style="left:52px;top:304.0px" width="16" height="16" viewBox="0 0 16 16"><rect x="1" y="1.5" width="14" height="13" fill="#ffff58"/><path d="M2 15 Q3 6 8 4 T14 2" stroke="#222" stroke-width="2" fill="none"/><circle cx="8" cy="5" r="2.8" fill="#e01010"/><circle cx="11.5" cy="10" r="2.3" fill="#222"/><path d="M11.5 10 V14.5" stroke="#222" stroke-width="1.8"/></svg>
<div class="tr" style="left:73px;top:304.0px">bead12</div>
<svg class="abs" style="left:37px;top:323.0px" width="9" height="11" viewBox="0 0 9 11"><path d="M2 1.5 L6.5 5.5 L2 9.5 Z" fill="#fff" stroke="#8e8e8e" stroke-width="1.1"/></svg>
<div class="abs" style="left:47px;top:328.0px;width:4px;height:0;border-top:1px dotted #b8c8d8"></div>
<svg class="abs" style="left:52px;top:320.0px" width="16" height="16" viewBox="0 0 16 16"><rect x="1" y="1.5" width="14" height="13" fill="#ffff58"/><path d="M2 15 Q3 6 8 4 T14 2" stroke="#222" stroke-width="2" fill="none"/><circle cx="8" cy="5" r="2.8" fill="#e01010"/><circle cx="11.5" cy="10" r="2.3" fill="#222"/><path d="M11.5 10 V14.5" stroke="#222" stroke-width="1.8"/></svg>
<div class="tr" style="left:73px;top:320.0px">bead13</div>
<div class="abs" style="left:41px;top:344.0px;width:9px;height:0;border-top:1px dotted #a0a0a0"></div>
<div class="abs" style="left:47px;top:344.0px;width:4px;height:0;border-top:1px dotted #b8c8d8"></div>
<svg class="abs" style="left:52px;top:336.0px" width="16" height="16" viewBox="0 0 16 16"><rect x="1" y="1.5" width="14" height="13" fill="#ffff58"/><path d="M2 15 Q3 6 8 4 T14 2" stroke="#222" stroke-width="2" fill="none"/><circle cx="8" cy="5" r="2.8" fill="#e01010"/><circle cx="11.5" cy="10" r="2.3" fill="#222"/><path d="M11.5 10 V14.5" stroke="#222" stroke-width="1.8"/></svg>
<div class="tr" style="left:73px;top:336.0px">bead14</div>
<svg class="abs" style="left:37px;top:355.0px" width="9" height="11" viewBox="0 0 9 11"><path d="M2 1.5 L6.5 5.5 L2 9.5 Z" fill="#fff" stroke="#8e8e8e" stroke-width="1.1"/></svg>
<div class="abs" style="left:47px;top:360.0px;width:4px;height:0;border-top:1px dotted #b8c8d8"></div>
<svg class="abs" style="left:52px;top:352.0px" width="16" height="16" viewBox="0 0 16 16"><rect x="1" y="1.5" width="14" height="13" fill="#ffff58"/><path d="M2 15 Q3 6 8 4 T14 2" stroke="#222" stroke-width="2" fill="none"/><circle cx="8" cy="5" r="2.8" fill="#e01010"/><circle cx="11.5" cy="10" r="2.3" fill="#222"/><path d="M11.5 10 V14.5" stroke="#222" stroke-width="1.8"/></svg>
<div class="tr" style="left:73px;top:352.0px">bead15</div>
<svg class="abs" style="left:37px;top:371.0px" width="9" height="11" viewBox="0 0 9 11"><path d="M2 1.5 L6.5 5.5 L2 9.5 Z" fill="#fff" stroke="#8e8e8e" stroke-width="1.1"/></svg>
<div class="abs" style="left:47px;top:376.0px;width:4px;height:0;border-top:1px dotted #b8c8d8"></div>
<svg class="abs" style="left:52px;top:368.0px" width="16" height="16" viewBox="0 0 16 16"><rect x="1" y="1.5" width="14" height="13" fill="#ffff58"/><path d="M2 15 Q3 6 8 4 T14 2" stroke="#222" stroke-width="2" fill="none"/><circle cx="8" cy="5" r="2.8" fill="#e01010"/><circle cx="11.5" cy="10" r="2.3" fill="#222"/><path d="M11.5 10 V14.5" stroke="#222" stroke-width="1.8"/></svg>
<div class="tr" style="left:73px;top:368.0px">bead16</div>
<svg class="abs" style="left:37px;top:387.0px" width="9" height="11" viewBox="0 0 9 11"><path d="M2 1.5 L6.5 5.5 L2 9.5 Z" fill="#fff" stroke="#8e8e8e" stroke-width="1.1"/></svg>
<div class="abs" style="left:47px;top:392.0px;width:4px;height:0;border-top:1px dotted #b8c8d8"></div>
<svg class="abs" style="left:52px;top:384.0px" width="16" height="16" viewBox="0 0 16 16"><rect x="1" y="1.5" width="14" height="13" fill="#ffff58"/><path d="M2 15 Q3 6 8 4 T14 2" stroke="#222" stroke-width="2" fill="none"/><circle cx="8" cy="5" r="2.8" fill="#e01010"/><circle cx="11.5" cy="10" r="2.3" fill="#222"/><path d="M11.5 10 V14.5" stroke="#222" stroke-width="1.8"/></svg>
<div class="tr" style="left:73px;top:384.0px">bead17</div>
<svg class="abs" style="left:37px;top:403.0px" width="9" height="11" viewBox="0 0 9 11"><path d="M2 1.5 L6.5 5.5 L2 9.5 Z" fill="#fff" stroke="#8e8e8e" stroke-width="1.1"/></svg>
<div class="abs" style="left:47px;top:408.0px;width:4px;height:0;border-top:1px dotted #b8c8d8"></div>
<svg class="abs" style="left:52px;top:400.0px" width="16" height="16" viewBox="0 0 16 16"><rect x="1" y="1.5" width="14" height="13" fill="#ffff58"/><path d="M2 15 Q3 6 8 4 T14 2" stroke="#222" stroke-width="2" fill="none"/><circle cx="8" cy="5" r="2.8" fill="#e01010"/><circle cx="11.5" cy="10" r="2.3" fill="#222"/><path d="M11.5 10 V14.5" stroke="#222" stroke-width="1.8"/></svg>
<div class="tr" style="left:73px;top:400.0px">bead3</div>
<svg class="abs" style="left:37px;top:419.0px" width="9" height="11" viewBox="0 0 9 11"><path d="M2 1.5 L6.5 5.5 L2 9.5 Z" fill="#fff" stroke="#8e8e8e" stroke-width="1.1"/></svg>
<div class="abs" style="left:47px;top:424.0px;width:4px;height:0;border-top:1px dotted #b8c8d8"></div>
<svg class="abs" style="left:52px;top:416.0px" width="16" height="16" viewBox="0 0 16 16"><rect x="1" y="1.5" width="14" height="13" fill="#ffff58"/><path d="M2 15 Q3 6 8 4 T14 2" stroke="#222" stroke-width="2" fill="none"/><circle cx="8" cy="5" r="2.8" fill="#e01010"/><circle cx="11.5" cy="10" r="2.3" fill="#222"/><path d="M11.5 10 V14.5" stroke="#222" stroke-width="1.8"/></svg>
<div class="tr" style="left:73px;top:416.0px">bead4</div>
<div class="abs" style="left:23px;top:31px;width:1px;height:148px;background:#9c9c9c"></div>
<div class="abs" style="left:23px;top:255px;width:1px;height:168px;background:#9c9c9c"></div>
<div class="abs" style="left:4px;top:223px;width:1px;height:200px;background:#9c9c9c"></div>
<div class="abs" style="left:23px;top:175px;width:1px;height:26px;background:#9c9c9c"></div>
<div class="abs" style="left:175px;top:0;width:16px;height:421px;background:#f0f0f0;border-left:1px solid #e0e0e0;box-sizing:border-box"></div>
<svg class="abs" style="left:179px;top:7px" width="8" height="6" viewBox="0 0 8 6"><path d="M0 5 L4 0.5 L8 5Z" fill="#333"/></svg>
<svg class="abs" style="left:179px;top:411px" width="8" height="6" viewBox="0 0 8 6"><path d="M0 1 L4 5.5 L8 1Z" fill="#333"/></svg>
<div class="abs" style="left:175px;top:59px;width:14px;height:85px;border:1px solid #979797;border-radius:3px;box-sizing:border-box;background:linear-gradient(90deg,#f5f5f5,#e4e4e4 50%,#cfcfcf 50%,#dadada)"><div class="abs" style="left:3px;top:38px;width:6px;height:1px;background:#555;box-shadow:0 2px 0 #555,0 4px 0 #555"></div></div>
</div>
<div class="abs" style="left:202px;top:21px;width:6px;height:446px;background:#f0f0f0"></div><div class="phead" style="top:471px;height:18px"><span>Properties</span><svg class="px" viewBox="0 0 10 10"><path d="M1.5 1.5 L8.5 8.5 M8.5 1.5 L1.5 8.5" stroke="#111" stroke-width="2.2"/></svg></div>
<div class="abs" style="left:0;top:489px;width:210px;height:2px;background:#fafafa"></div>
<div class="abs" style="left:0;top:491px;width:208px;height:2px;background:#6f6f6f"></div>
<div class="abs" style="left:0px;top:493px;width:2px;height:214px;background:#7a7a7a"></div>
<div class="abs" style="left:3px;top:493px;width:204px;height:15px;background:#f6f6f6"></div>
<div class="t" style="left:2px;top:493px;font-size:14px;letter-spacing:0;font-weight:bold;line-height:15px">Multiple</div>
<svg class="abs" style="left:191px;top:495px" width="12" height="14" viewBox="0 0 12 14"><path d="M6 0.8 C2.5 0.8 1 3 1 5 C1 7 3 8 3.5 10 L8.5 10 C9 8 11 7 11 5 C11 3 9.5 0.8 6 0.8Z" fill="#f4e400" stroke="#222" stroke-width="1.4"/><rect x="3.8" y="10" width="4.4" height="3.4" fill="#222"/></svg>
<div class="abs" style="left:202px;top:495px;width:2px;height:13px;background:#777"></div>
<div class="abs" style="left:3px;top:507px;width:204px;height:97px;background:#fff;border-top:1px solid #c8c8c8;box-sizing:border-box"></div>
<div class="abs" style="left:3px;top:507px;width:4px;height:97px;background:#d4d4d4"></div>
<div class="abs" style="left:103px;top:507px;width:1px;height:97px;background:#b8b8b8"></div>
<div class="abs" style="left:7px;top:523px;width:200px;height:1px;background:#d2d2d2"></div>
<div class="t" style="left:12px;top:509px;font-size:11px;line-height:13px">Color</div>
<div class="t" style="left:108px;top:509px;font-size:11px;line-height:13px">(various)</div>
<div class="abs" style="left:7px;top:539px;width:200px;height:1px;background:#d2d2d2"></div>
<div class="t" style="left:12px;top:525px;font-size:11px;line-height:13px">Visible</div>
<div class="abs" style="left:109px;top:525px;width:12px;height:12px;border:1px solid #8e8f8f;background:linear-gradient(135deg,#dcdcdc,#fff);box-sizing:border-box"></div>
<svg class="abs" style="left:110px;top:526px" width="10" height="10" viewBox="0 0 10 10"><path d="M2 5 L4.2 8 L8 1.5" stroke="#1a2a9a" stroke-width="2" fill="none"/></svg>
<div class="t" style="left:124px;top:525px;font-size:11px;line-height:13px">True</div>
<div class="abs" style="left:7px;top:555px;width:200px;height:1px;background:#d2d2d2"></div>
<div class="t" style="left:12px;top:541px;font-size:11px;line-height:13px">Layer</div>
<div class="abs" style="left:108px;top:540px;width:14px;height:15px;background:#ffff40"></div>
<svg class="abs" style="left:109px;top:540px" width="12" height="14" viewBox="0 0 12 14"><path d="M6 0.8 C2.5 0.8 1 3 1 5 C1 7 3 8 3.5 10 L8.5 10 C9 8 11 7 11 5 C11 3 9.5 0.8 6 0.8Z" fill="#f4e400" stroke="#222" stroke-width="1.4"/><rect x="3.8" y="10" width="4.4" height="3.4" fill="#222"/></svg>
<div class="t" style="left:127px;top:541px;font-size:11px;line-height:13px">0</div>
<div class="abs" style="left:7px;top:571px;width:200px;height:1px;background:#d2d2d2"></div>
<div class="t" style="left:12px;top:557px;font-size:11px;line-height:13px">Lock</div>
<div class="abs" style="left:109px;top:557px;width:12px;height:12px;border:1px solid #8e8f8f;background:linear-gradient(135deg,#dcdcdc,#fff);box-sizing:border-box"></div>
<div class="t" style="left:124px;top:557px;font-size:11px;line-height:13px">False</div>
<div class="abs" style="left:7px;top:587px;width:200px;height:1px;background:#d2d2d2"></div>
<div class="t" style="left:12px;top:573px;font-size:11px;line-height:13px">Symmetry exempt</div>
<div class="abs" style="left:109px;top:573px;width:12px;height:12px;border:1px solid #8e8f8f;background:linear-gradient(135deg,#dcdcdc,#fff);box-sizing:border-box"></div>
<div class="t" style="left:124px;top:573px;font-size:11px;line-height:13px">False</div>
<div class="abs" style="left:7px;top:603px;width:200px;height:1px;background:#d2d2d2"></div>
<div class="t" style="left:12px;top:589px;font-size:11px;line-height:13px">User data</div>
<div class="phead" style="top:712px;height:16px"><span>Selection Set</span><svg class="px" viewBox="0 0 10 10"><path d="M1.5 1.5 L8.5 8.5 M8.5 1.5 L1.5 8.5" stroke="#111" stroke-width="2.2"/></svg></div>
<div class="abs" style="left:0;top:728px;width:210px;height:3px;background:#fafafa"></div>
<div class="abs" style="left:0;top:731px;width:208px;height:2px;background:#6f6f6f"></div>
<div class="abs" style="left:0px;top:732px;width:2px;height:212px;background:#7a7a7a"></div>
<div style="position:absolute;top:735px;width:19px;height:17px;border:1px solid #a8a8a8;box-sizing:border-box;background:#f6f6f6;border-radius:2px;left:8px;width:21px;border-color:#555;background:#e4e4e4"></div>
<svg class="abs" style="left:9px;top:735px" width="19" height="17" viewBox="0 0 19 17"><path d="M2 2 V15 M6 2 V15 M10 2 V15 M2 2 H10 M2 15 H10" stroke="#222" stroke-width="1.6" fill="none"/><path d="M15 2 V15 M13 5 L15 2 L17 5 M13 12 L15 15 L17 12" stroke="#222" stroke-width="1.4" fill="none"/></svg>
<div style="position:absolute;top:735px;width:19px;height:17px;border:1px solid #a8a8a8;box-sizing:border-box;background:#f6f6f6;border-radius:2px;left:33px"></div>
<svg class="abs" style="left:33px;top:735px" width="19" height="17" viewBox="0 0 19 17"><path d="M9.5 14 V5 M5.5 8 L9.5 3 L13.5 8" stroke="#333" stroke-width="2" fill="none"/></svg>
<div style="position:absolute;top:735px;width:19px;height:17px;border:1px solid #a8a8a8;box-sizing:border-box;background:#f6f6f6;border-radius:2px;left:57px"></div>
<svg class="abs" style="left:57px;top:735px" width="19" height="17" viewBox="0 0 19 17"><path d="M9.5 3 V12 M5.5 9 L9.5 14 L13.5 9" stroke="#333" stroke-width="2" fill="none"/></svg>
<div style="position:absolute;top:735px;width:19px;height:17px;border:1px solid #a8a8a8;box-sizing:border-box;background:#f6f6f6;border-radius:2px;left:81px"></div>
<svg class="abs" style="left:81px;top:735px" width="19" height="17" viewBox="0 0 19 17"><path d="M4 3 L15 14 M15 3 L4 14" stroke="#d42020" stroke-width="1.8"/></svg>
<div style="position:absolute;top:735px;width:19px;height:17px;border:1px solid #a8a8a8;box-sizing:border-box;background:#f6f6f6;border-radius:2px;left:104px"></div>
<svg class="abs" style="left:104px;top:735px" width="19" height="17" viewBox="0 0 19 17"><rect x="3" y="2" width="13" height="4" fill="#3a4ad0"/><rect x="3.5" y="2.5" width="12" height="12" fill="none" stroke="#555" stroke-width="1"/><path d="M5 6 L14 14 M14 6 L5 14" stroke="#d42020" stroke-width="1.8"/></svg>
<div class="t" style="left:130px;top:737px;font-size:11.5px;line-height:13px">3 Entities</div>
<div class="abs" style="left:6px;top:758px;width:201px;height:177px;background:#fff;border:1px solid #828790;box-sizing:border-box;overflow:hidden">
<div class="abs" style="left:0;top:0;width:199px;height:21px;background:linear-gradient(#fff,#f2f2f2 60%,#e8e8e8);border-bottom:1px solid #d5d5d5"></div>
<div class="abs" style="left:129px;top:0;width:1px;height:21px;background:#c4c4c4"></div>
<div class="t" style="left:7px;top:5px;font-size:11px;line-height:13px">Name</div>
<div class="t" style="left:135px;top:5px;font-size:11px;line-height:13px">Type</div>
<div class="t" style="left:26px;top:26px;font-size:11px;line-height:13px">e2</div>
<div class="t" style="left:135px;top:26px;font-size:11px;line-height:13px">Proximity Bead</div>
<div class="t" style="left:26px;top:43px;font-size:11px;line-height:13px">c1</div>
<div class="t" style="left:135px;top:43px;font-size:11px;line-height:13px">Procedural Curve</div>
<div class="t" style="left:26px;top:60px;font-size:11px;line-height:13px">l1</div>
<div class="t" style="left:135px;top:60px;font-size:11px;line-height:13px">Line</div>
<div class="abs" style="left:0;top:161px;width:199px;height:16px;background:#f0f0f0"></div>
<svg class="abs" style="left:5px;top:165px" width="6" height="8" viewBox="0 0 6 8"><path d="M5 0 L0.5 4 L5 8Z" fill="#333"/></svg>
<svg class="abs" style="left:188px;top:165px" width="6" height="8" viewBox="0 0 6 8"><path d="M1 0 L5.5 4 L1 8Z" fill="#333"/></svg>
<div class="abs" style="left:16px;top:162px;width:151px;height:14px;border:1px solid #979797;border-radius:3px;box-sizing:border-box;background:linear-gradient(#f5f5f5,#e4e4e4 50%,#cfcfcf 50%,#dadada)"><div class="abs" style="left:72px;top:3px;width:1px;height:6px;background:#555;box-shadow:2px 0 0 #555,4px 0 0 #555"></div></div>
</div></div>
<div class="abs" style="left:210px;top:93px;width:4px;height:936px;background:#f4f4f4"></div>
<div id="canvas" class="abs"><svg class="abs" style="left:0;top:0" width="1184" height="935" viewBox="107 46.5 592 467.5" fill="none" stroke-linecap="butt">
<path d="M129.3 220.2 C129.6 221.7 130.1 225.9 130.9 229.2 C131.7 232.5 132.8 236.3 134.3 239.9 C135.8 243.5 137.7 247.4 140.0 250.9 C142.3 254.4 144.8 258.1 148.0 261.2 C151.2 264.3 155.3 267.4 159.5 269.6 C163.7 271.9 168.6 273.5 173.2 274.7 C177.8 275.9 182.5 276.4 186.9 277.0 C191.3 277.6 192.8 277.1 199.5 278.3 C206.2 279.5 216.3 282.2 227.1 284.2 C237.9 286.2 251.9 288.5 264.3 290.1 C276.7 291.7 290.2 293.0 301.4 293.8 C312.5 294.6 321.9 294.7 331.2 294.9 C340.5 295.1 346.7 295.2 357.2 294.9 C367.7 294.5 383.8 293.5 394.3 292.8 C404.8 292.1 410.5 291.6 420.0 290.6 C429.5 289.6 440.9 288.2 451.4 286.7 C461.9 285.2 472.4 283.5 482.9 281.4 C493.4 279.3 503.8 277.1 514.3 274.3 C524.8 271.6 535.2 268.1 545.7 264.9 C556.2 261.7 566.6 258.6 577.1 255.0 C587.6 251.4 601.5 246.1 608.6 243.4 C615.7 240.7 617.8 239.7 619.6 238.9" stroke="#a4a4a4" stroke-width="0.75"/>
<path d="M129.3 220.2 L625.8 163.3 L624.8 200 Q623.6 218 621.7 232.5 Q621 237 619.6 238.9" stroke="#a4a4a4" stroke-width="0.75"/>
<path d="M199.5 278.6 L199.5 226.4 L619.5 186.2 L619.5 238.5" stroke="#009aa4" stroke-width="0.9"/>
<path d="M225.75 276.1 L225.75 269.6 M252.00 273.6 L252.00 256.8 M278.25 271.1 L278.25 243.6 M304.50 268.6 L304.50 231.3 M330.75 266.1 L330.75 221.1 M357.00 263.6 L357.00 213.1 M383.25 261.1 L383.25 208.4 M409.50 258.6 L409.50 207.1 M435.75 256.0 L435.75 209.0 M462.00 253.5 L462.00 212.3 M488.25 251.0 L488.25 217.4 M514.50 248.5 L514.50 224.0 M540.75 246.0 L540.75 231.1 M567.00 243.5 L567.00 235.8 M593.25 241.0 L593.25 239.0 " stroke="#009aa4" stroke-width="0.9"/>
<defs><linearGradient id="yg" gradientUnits="userSpaceOnUse" x1="199.5" y1="0" x2="619.5" y2="0"><stop offset="0" stop-color="#70ff60"/><stop offset="0.05" stop-color="#b0ff40"/><stop offset="0.12" stop-color="#ffff00"/><stop offset="0.72" stop-color="#ffff00"/><stop offset="0.80" stop-color="#c8ff30"/><stop offset="0.87" stop-color="#b8ff40"/><stop offset="0.93" stop-color="#c8ff30"/><stop offset="0.96" stop-color="#ffd000"/><stop offset="1" stop-color="#ff9000"/></linearGradient></defs>
<path d="M199.4 278.4 C203.8 276.9 216.8 273.3 225.5 269.7 C234.2 266.1 242.9 261.3 251.7 256.9 C260.5 252.5 269.7 247.8 278.5 243.5 C287.3 239.2 295.8 235.0 304.5 231.3 C313.2 227.6 321.7 224.2 330.5 221.2 C339.3 218.1 348.4 215.1 357.2 213.0 C366.0 210.9 376.6 209.4 383.2 208.4 C389.8 207.4 392.6 207.2 397.0 207.0 C401.4 206.8 403.0 206.8 409.4 207.1 C415.8 207.4 426.6 208.1 435.4 209.0 C444.2 209.9 453.6 210.9 462.4 212.3 C471.2 213.7 479.7 215.5 488.4 217.4 C497.1 219.3 505.6 221.7 514.4 224.0 C523.2 226.3 532.3 229.2 541.1 231.2 C549.9 233.2 558.4 234.5 567.1 235.8 C575.9 237.1 585.0 238.6 593.6 239.0 C602.2 239.4 614.8 238.5 619.0 238.4" stroke="url(#yg)" stroke-width="1.3"/>
<path d="M199.5 278.6 L619.5 238.5" stroke="#ff7f00" stroke-width="1.3"/>
<path d="M111 287.2 L199.5 278.3" stroke="#a0a0a0" stroke-width="0.9" stroke-dasharray="1.1 2.9"/>
<path d="M410 224.4 L619.5 238" stroke="#a0a0a0" stroke-width="0.9" stroke-dasharray="1.1 2.9"/>
<path d="M626.2 55 L626.2 472" stroke="#a8a8a8" stroke-width="1.7" stroke-dasharray="0.9 3.1"/>
<path d="M622 238.4 L696 231.7" stroke="#a0a0a0" stroke-width="0.9" stroke-dasharray="1.1 2.9"/>
<path d="M622 239.1 L696 242.7" stroke="#a0a0a0" stroke-width="0.9" stroke-dasharray="1.1 2.9"/>
<text x="107.2" y="295" font-size="8" fill="#fff" font-family="Liberation Sans,sans-serif" font-weight="bold" stroke="none" letter-spacing="0">X</text>
<text x="406.8" y="231" font-size="8" fill="#fff" font-family="Liberation Sans,sans-serif" font-weight="bold" stroke="none" letter-spacing="0">Y</text>
<text x="625.4" y="54.2" font-size="7.5" fill="#fff" font-family="Liberation Sans,sans-serif" font-weight="bold" stroke="none" letter-spacing="0">Z</text>
<text x="388.6" y="215" font-size="7.6" fill="#00f000" font-family="Liberation Sans,sans-serif" font-weight="bold" stroke="none" letter-spacing="0">e2</text>
<rect x="387.2" y="206" width="1.8" height="1.8" fill="#00e000" stroke="none"/>
</svg></div>
<div id="status" class="abs">
<div class="st" style="left:4px">For Help, press F1</div>
<div class="ssep" style="left:672px"></div>
<div class="ssep" style="left:948px"></div>
<div class="ssep" style="left:1047px"></div>
<div class="ssep" style="left:1121px"></div>
<div class="ssep" style="left:1197px"></div>
<div class="ssep" style="left:1308px"></div>
<div class="abs" style="left:672px;top:3px;width:726px;height:1px;background:#b4b4b4"></div>
<div class="st" style="left:677px">L:0</div>
<div class="st" style="left:1051px">Lat -4.5</div>
<div class="st" style="left:1126px">Lon 39.5</div>
<div class="st" style="left:1202px">Radius 10.9</div>
<div class="st" style="left:1313px">Tilt 0.0</div>
</div>
<div class="abs" style="left:0;top:1047px;width:1400px;height:3px;background:linear-gradient(90deg,#8e8e8e 0,#9a9a9a 48%,#c4c4c4 50%,#c8c8c8)"></div>
</div></body></html>
